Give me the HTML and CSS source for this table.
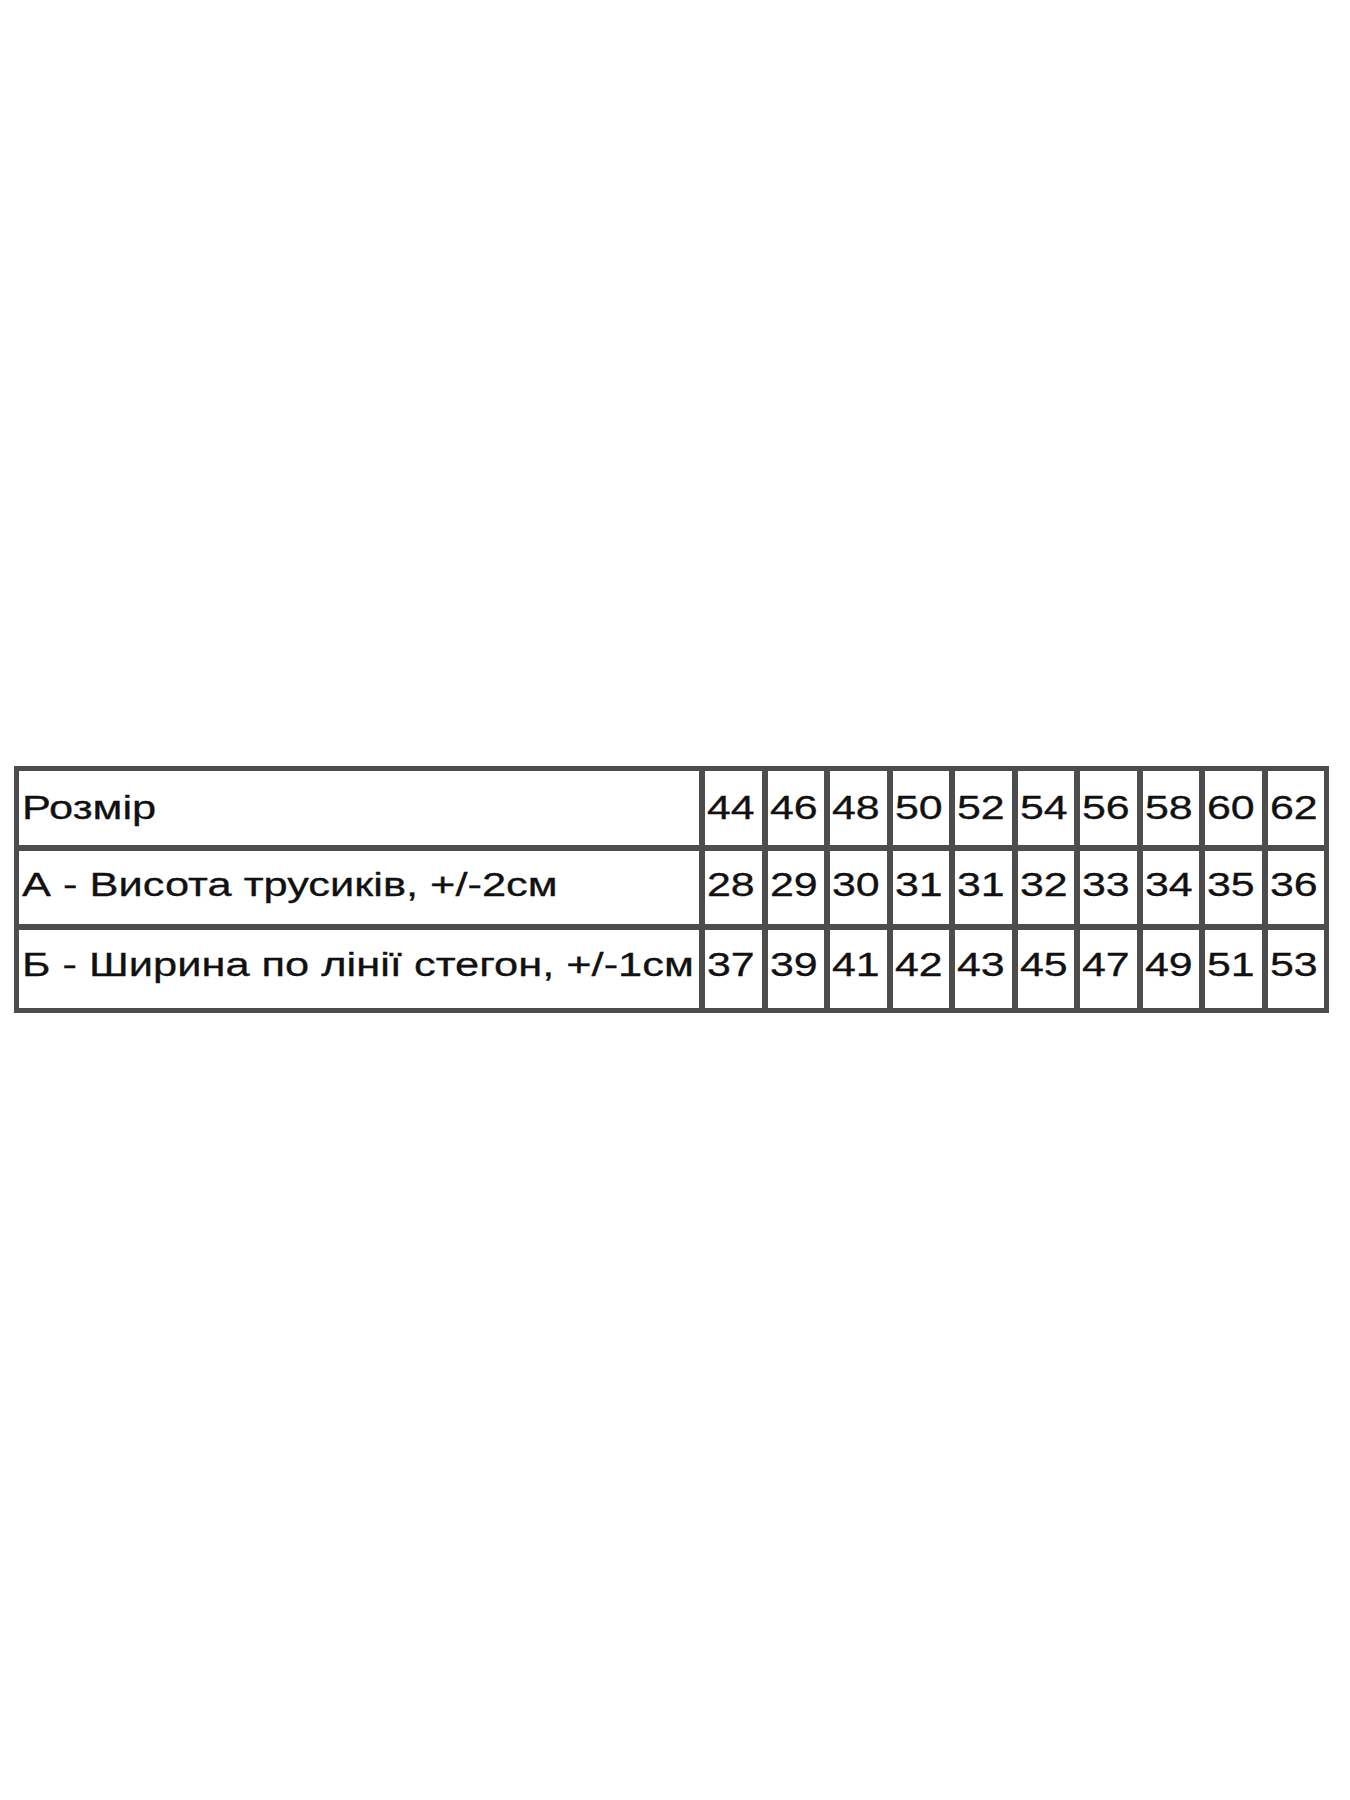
FILE: index.html
```html
<!DOCTYPE html>
<html lang="uk">
<head>
<meta charset="utf-8">
<title>Розмірна сітка</title>
<link rel="stylesheet" href="styles.css">
</head>
<body>
<div class="page">
  <div class="size-grid">
    <div class="row row-a">
      <div class="cell label"><span class="txt">Розмір</span></div>
      <div class="cell num"><span class="txt">44</span></div>
      <div class="cell num"><span class="txt">46</span></div>
      <div class="cell num"><span class="txt">48</span></div>
      <div class="cell num"><span class="txt">50</span></div>
      <div class="cell num"><span class="txt">52</span></div>
      <div class="cell num"><span class="txt">54</span></div>
      <div class="cell num"><span class="txt">56</span></div>
      <div class="cell num"><span class="txt">58</span></div>
      <div class="cell num"><span class="txt">60</span></div>
      <div class="cell num"><span class="txt">62</span></div>
    </div>
    <div class="row row-b">
      <div class="cell label"><span class="txt">А - Висота трусиків, +/-2см</span></div>
      <div class="cell num"><span class="txt">28</span></div>
      <div class="cell num"><span class="txt">29</span></div>
      <div class="cell num"><span class="txt">30</span></div>
      <div class="cell num"><span class="txt">31</span></div>
      <div class="cell num"><span class="txt">31</span></div>
      <div class="cell num"><span class="txt">32</span></div>
      <div class="cell num"><span class="txt">33</span></div>
      <div class="cell num"><span class="txt">34</span></div>
      <div class="cell num"><span class="txt">35</span></div>
      <div class="cell num"><span class="txt">36</span></div>
    </div>
    <div class="row row-c">
      <div class="cell label"><span class="txt">Б - Ширина по лінії стегон, +/-1см</span></div>
      <div class="cell num"><span class="txt">37</span></div>
      <div class="cell num"><span class="txt">39</span></div>
      <div class="cell num"><span class="txt">41</span></div>
      <div class="cell num"><span class="txt">42</span></div>
      <div class="cell num"><span class="txt">43</span></div>
      <div class="cell num"><span class="txt">45</span></div>
      <div class="cell num"><span class="txt">47</span></div>
      <div class="cell num"><span class="txt">49</span></div>
      <div class="cell num"><span class="txt">51</span></div>
      <div class="cell num"><span class="txt">53</span></div>
    </div>
  </div>
</div>
</body>
</html>
```

FILE: styles.css
```css
html, body {
  margin: 0;
  padding: 0;
  background: #ffffff;
}

.page {
  padding: 766px 0 0 14px;
  font-family: "Liberation Sans", Arial, sans-serif;
  color: #111111;
}

.size-grid {
  display: grid;
  grid-template-columns: 680px repeat(10, 56.5px);
  grid-template-rows: 74px 73px 78px;
  gap: 6px;
  padding: 5px;
  width: max-content;
  background: #4d4d4d;
}

.row {
  display: contents;
}

.cell {
  background: #ffffff;
  font-size: 33px;
  line-height: 33px;
  white-space: nowrap;
  overflow: visible;
}

.label {
  padding-left: 3px;
}

.num {
  padding-left: 2px;
}

.row-a .cell { padding-top: 20px; }
.row-b .cell { padding-top: 17px; }
.row-c .cell { padding-top: 18px; }

.txt {
  display: inline-block;
  transform: scaleX(1.315);
  transform-origin: 0 50%;
  -webkit-text-stroke: 0.3px #111111;
}

.num .txt {
  transform: scaleX(1.3);
}
```
